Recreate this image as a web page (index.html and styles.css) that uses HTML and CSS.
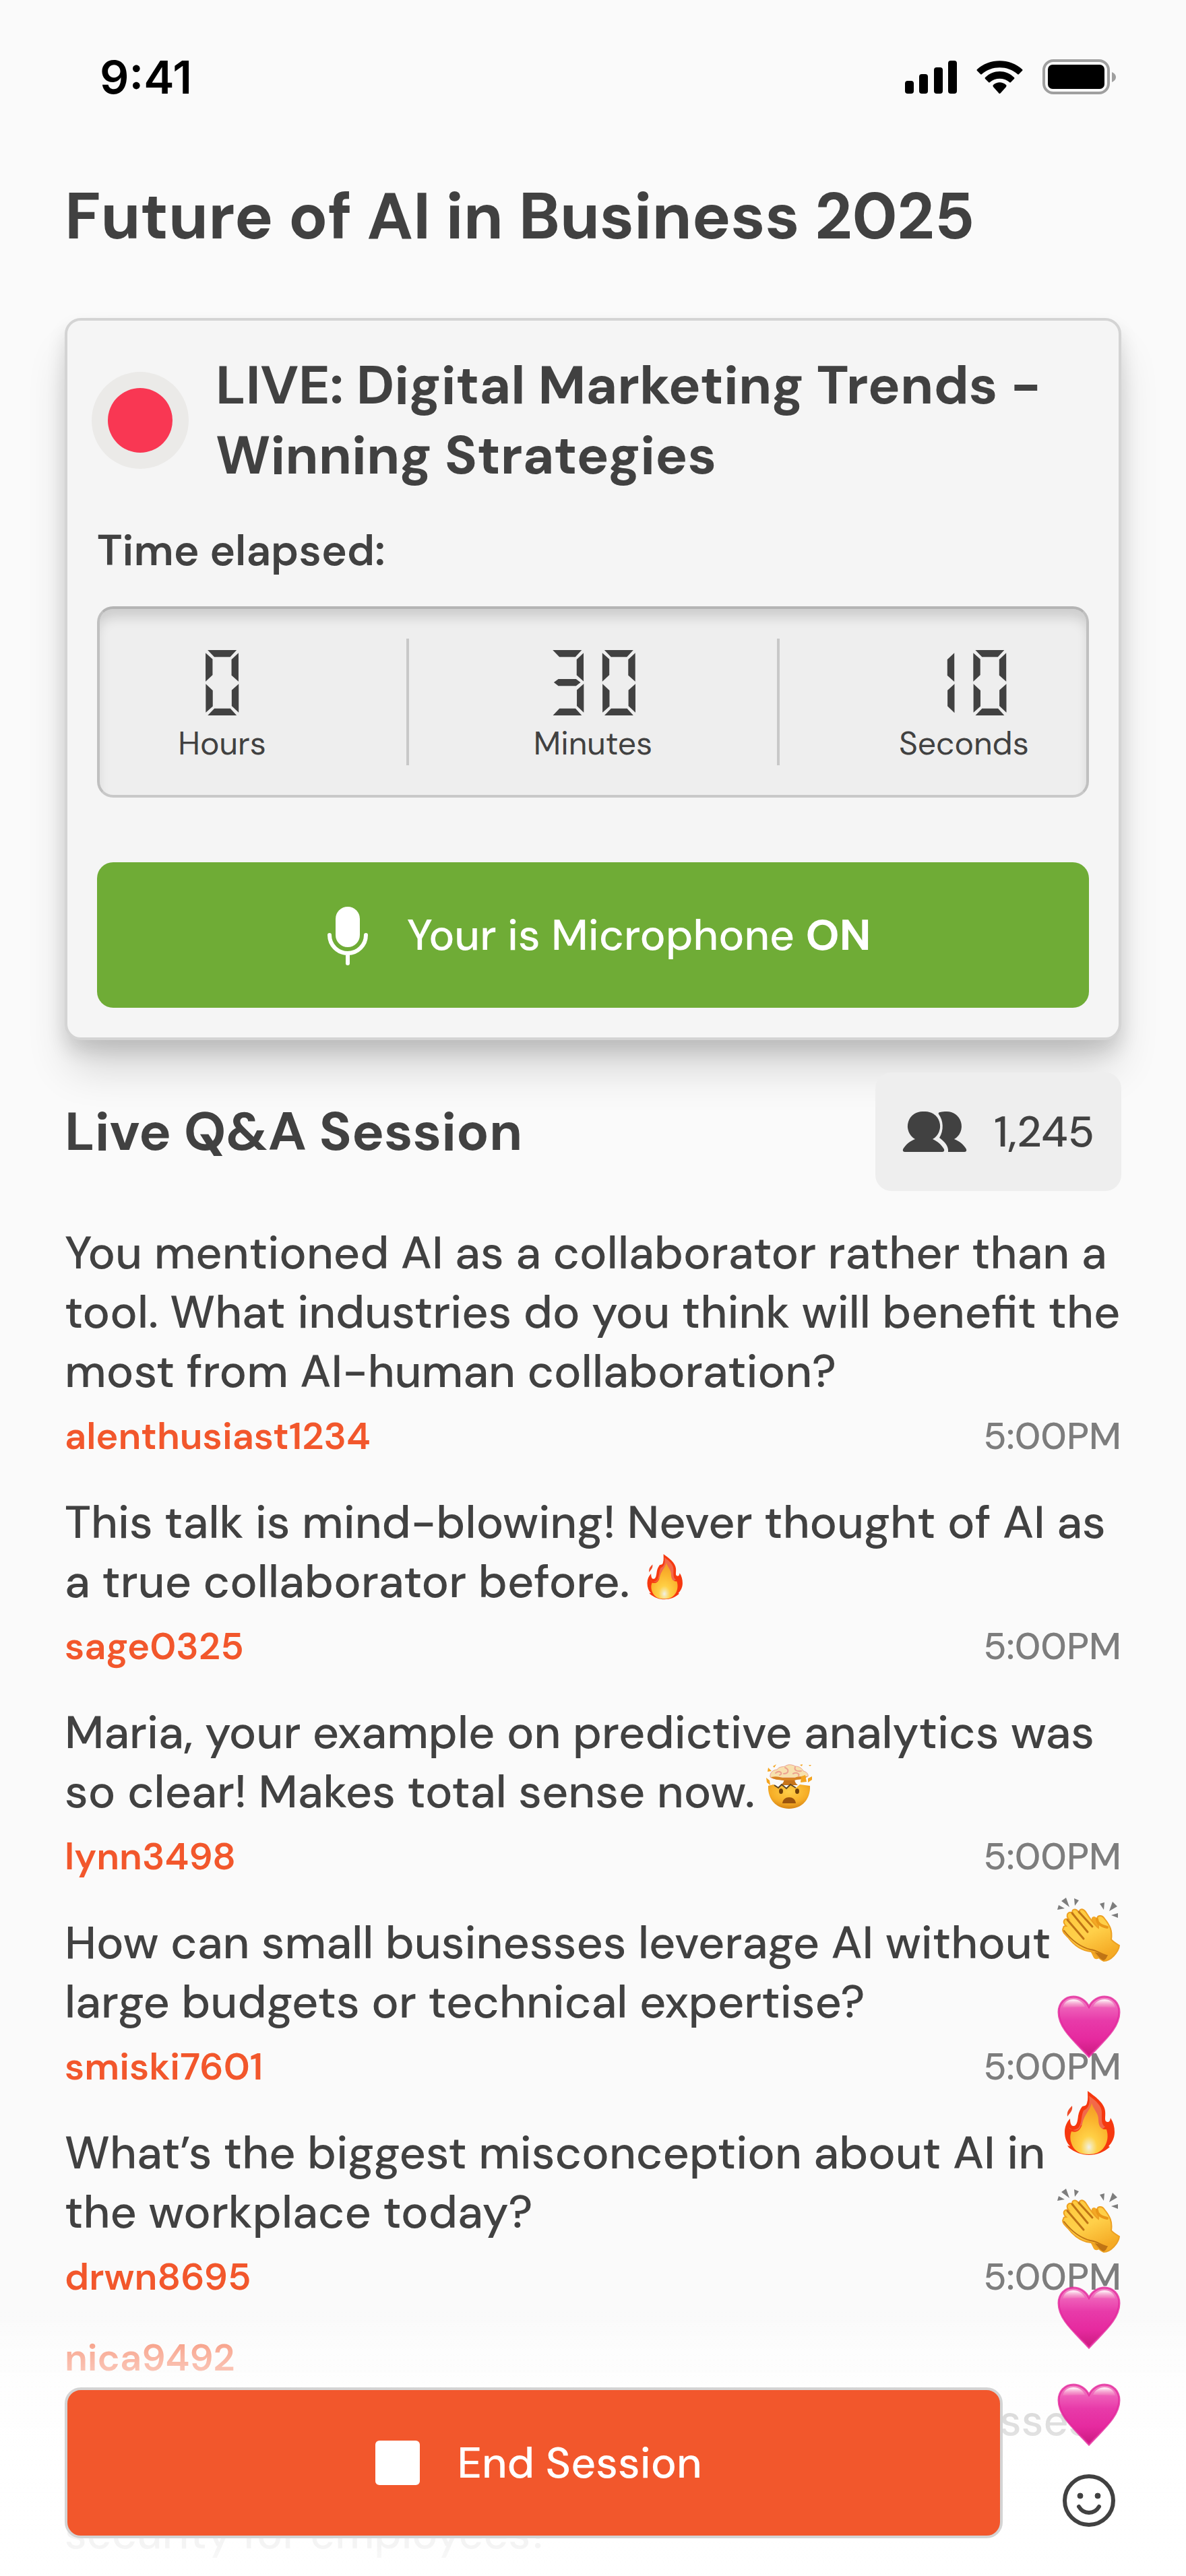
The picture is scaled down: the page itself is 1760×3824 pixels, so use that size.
FILE: index.html
```html
<!DOCTYPE html>
<html lang="en">
	<head>
		<meta charset="UTF-8" />
		<meta name="viewport" content="width=device-width, initial-scale=1.0" />
		<title>Live Session</title>
		<link rel="stylesheet" href="styles.css">
	</head>
	<body>
		<!-- shared emoji shapes -->
		<svg class="sprite" aria-hidden="true">
			<defs>
				<linearGradient id="heartFill" x1="0" y1="0" x2="0" y2="1">
					<stop offset="0" stop-color="#f28cc6" />
					<stop offset="0.2" stop-color="#ee5cb8" />
					<stop offset="0.4" stop-color="#e83aa9" />
					<stop offset="0.7" stop-color="#e62a9f" />
					<stop offset="1" stop-color="#c91a7e" />
				</linearGradient>
				<linearGradient id="heartShine" x1="0" y1="0" x2="0" y2="1">
					<stop offset="0" stop-color="#fff" />
					<stop offset="1" stop-color="#f7a6c8" stop-opacity="0.2" />
				</linearGradient>
				<radialGradient id="flameInner" cx="0.5" cy="0.86" r="0.85">
					<stop offset="0" stop-color="#f1f0ea" />
					<stop offset="0.1" stop-color="#f7e5a0" />
					<stop offset="0.26" stop-color="#ffd046" />
					<stop offset="0.62" stop-color="#fbb52e" />
					<stop offset="1" stop-color="#f39a24" />
				</radialGradient>
				<linearGradient id="handFill" x1="0" y1="0" x2="0.5" y2="1">
					<stop offset="0" stop-color="#ffc93c" />
					<stop offset="0.55" stop-color="#ffd04a" />
					<stop offset="1" stop-color="#f5ab25" />
				</linearGradient>
				<radialGradient id="faceFill" cx="0.5" cy="0.3" r="0.75">
					<stop offset="0" stop-color="#ffcf48" />
					<stop offset="0.6" stop-color="#f6ad26" />
					<stop offset="1" stop-color="#cf7b12" />
				</radialGradient>
				<symbol id="heart" viewBox="0 0 96 96">
					<path d="M48 19C43 9 34 4 25 4C12 4 3 14 3 27C3 51 27 70 48 93C69 70 93 51 93 27C93 14 84 4 71 4C62 4 53 9 48 19Z" fill="url(#heartFill)" />
					<path d="M48 19C43 9 34 4 25 4C12 4 3 14 3 27C3 51 27 70 48 93C69 70 93 51 93 27C93 14 84 4 71 4C62 4 53 9 48 19Z" fill="none" stroke="#e3259b" stroke-width="3" stroke-opacity="0.8" />
					<path d="M9 20C11 12 17 8 25 8C33 8 39 12 42 19Z" fill="url(#heartShine)" />
					<path d="M54 19C57 12 63 8 71 8C79 8 85 12 87 20Z" fill="url(#heartShine)" />
				</symbol>
				<symbol id="fire" viewBox="0 0 96 96">
					<path d="M46 0C57 8 71 18 72 30C73 38 70 45 75 46C79 46 79 44 80 40C84 46 86 53 86 61C86 70 82 77 77 82L79 83C70 91 60 95 48 95C37 95 27 91 18 84L16 81L20 82C15 77 12 70 12 61C12 53 15 46 20 41C20 47 21 52 25 52C30 52 31 45 32 37C33 31 35 27 38 23C40 22 44 23 45 18C47 12 46 6 46 0Z" fill="#f6380f" />
					<path d="M48 7C58 14 67 22 67 32C67 42 66 50 72 53C66 59 61 57 60 51L36 51C34 59 27 62 18 54C21 59 28 59 33 54C38 46 36 37 40 29C48 26 50 17 48 7Z" fill="#f2694a" />
					<path d="M52 18C55 28 62 33 62 42C62 51 65 58 74 57C77 66 76 76 70 84C65 91 57 94 48 94C37 94 30 91 25 84C20 76 19 67 22 60C31 63 36 57 38 49C40 40 43 36 46 31C49 26 51 23 52 18Z" fill="url(#flameInner)" />
					<path d="M23 22C24 29 21 31 16 38C15 30 18 27 23 22Z" fill="#ee4d2a" />
				</symbol>
				<symbol id="clap" viewBox="0 0 96 96">
					<g fill="#7d7d7d">
						<path d="M14 1L19 15L7 6ZM26 2L33 5L27 13ZM3 12L12 17L1 19ZM64 10L71 8L70 19ZM83 7L90 14L78 21ZM81 27L91 24V31Z" />
					</g>
					<path d="M52 45L52 31C55 27 59 29 62 35L80 60L64 90C61 93 57 93 55 90L50 80C38 80 26 70 17 59L10 51C7 46 11 43 15 46Z" fill="#f3a826" />
					<path d="M10 46C7 50 12 55 17 60C26 72 38 80 51 81C58 82 61 92 70 95C80 95 92 82 93 72C88 69 83 66 81 63C83 50 79 42 71 32C67 26 60 27 60 33C60 38 63 42 62 46C58 43 49 32 43 22C38 16 34 18 33 23C28 15 21 19 24 24C17 20 13 27 18 33C11 31 8 37 14 43C12 43 10 44 10 46Z" fill="url(#handFill)" stroke="#eda022" stroke-width="2" />
					<path d="M60 33C60 39 66 43 75 45" fill="none" stroke="#e99718" stroke-width="4" stroke-linecap="round" />
					<g fill="none" stroke="#bf7415" stroke-width="3" stroke-linecap="round">
						<path d="M33 22L53 44" />
						<path d="M23 24L46 52" />
						<path d="M16 34L40 62" />
						<path d="M11 50C22 64 34 74 50 78C60 79 64 84 74 87" stroke-width="2" />
					</g>
					<path d="M56 82C63 82 68 87 76 86C74 91 72 94 69 94C64 92 61 86 56 82Z" fill="#bf7415" />
				</symbol>
				<symbol id="mindblown" viewBox="0 0 68 68">
					<path d="M26 17H43C41 24 43 28 47 31H22C26 27 28 23 26 17Z" fill="#c6741a" />
					<path d="M6 19C5 12 11 8 16 8C19 3 25 4 28 3C33 -1 40 1 43 3C50 3 54 7 55 10C60 11 63 15 62 18C57 21 49 18 43 20H26C19 21 11 23 6 19Z" fill="#f7e1ae" stroke="#eda28f" stroke-width="1" />
					<path d="M7 19C17 17 20 19 25 20H43C48 17 56 19 61 18C54 24 45 22 42 24H25C18 23 11 23 7 19Z" fill="#d88322" />
					<path d="M14 13C20 8 26 14 20 16M28 5C35 8 33 14 26 14M43 4C41 9 46 11 52 10M40 14C46 11 50 15 48 17" fill="none" stroke="#eda28f" stroke-width="2" stroke-linecap="round" />
					<path d="M3 32L11 30L18 35L23 30L30 36L36 30L44 35L50 30L65 32C66 52 53 66 34 66C15 66 2 52 3 32Z" fill="url(#faceFill)" />
					<path d="M12 31L18 35L23 30L30 36L36 30L44 35" fill="none" stroke="#5d4524" stroke-width="2" />
					<ellipse cx="22" cy="40" rx="3" ry="4" fill="#6f4009" />
					<ellipse cx="46" cy="40" rx="3" ry="4" fill="#6f4009" />
					<path d="M24 58C25 46 43 46 44 58Z" fill="#9a530d" />
					<path d="M0 20L5 24L6 31L1 27ZM3 5L8 10L2 11ZM10 3L15 0L12 5ZM52 18L58 16L60 26L51 27ZM62 21L68 18V23L62 27ZM50 1L54 0L53 3ZM63 1L67 1L65 3Z" fill="#f4a41f" />
				</symbol>
			</defs>
		</svg>

		<header class="status-bar">
			<span class="clock">9:41</span>
			<div class="status-icons">
				<svg width="77" height="49" viewBox="0 0 77 49" aria-hidden="true">
					<rect x="0" y="30" width="13" height="19" rx="4" />
					<rect x="21" y="20" width="13" height="29" rx="4" />
					<rect x="43" y="10" width="13" height="39" rx="4" />
					<rect x="64" y="0" width="13" height="49" rx="4" />
				</svg>
				<svg width="69" height="49" viewBox="0 0 69 49" aria-hidden="true">
					<path d="M1 13C19 -4 50 -4 68 13Q69 14 68 15L63 20Q62 21 61 20C46 7 23 7 8 20Q7 21 6 20L1 15Q0 14 1 13Z" />
					<path d="M13 25C25 13 44 13 56 25Q57 26 56 27L51 32Q50 33 49 32C41 25 28 25 20 32Q19 33 18 32L13 27Q12 26 13 25Z" />
					<path d="M25 36C31 31 38 31 44 36Q45 37 44 39L36 48Q34 50 33 48L25 39Q24 37 25 36Z" />
				</svg>
				<svg width="109" height="52" viewBox="0 0 109 52" aria-hidden="true">
					<rect x="2" y="2" width="96" height="48" rx="14" fill="none" stroke="#9f9f9f" stroke-width="4" />
					<rect x="8" y="8" width="84" height="36" rx="7" />
					<path d="M103 19C111 22 111 31 103 34Z" fill="#9f9f9f" />
				</svg>
			</div>
		</header>

		<main class="page">
			<h1 class="page-title">Future of AI in Business 2025</h1>

			<section class="card">
				<div class="live">
					<div class="live-icon">
						<svg class="record" width="144" height="144" viewBox="0 0 144 144" aria-hidden="true">
							<circle cx="72" cy="72" r="72" fill="#ebeae8" />
							<circle cx="72" cy="72" r="48" fill="#f93753" />
						</svg>
					</div>
					<h2 class="live-title">LIVE: Digital Marketing Trends - Winning Strategies</h2>
				</div>
				<p class="elapsed">Time elapsed:</p>
				<div class="timer">
					<div class="unit">
						<span class="digits">0</span>
						<span class="label">Hours</span>
					</div>
					<div class="divider"></div>
					<div class="unit">
						<span class="digits">30</span>
						<span class="label">Minutes</span>
					</div>
					<div class="divider"></div>
					<div class="unit">
						<span class="digits">10</span>
						<span class="label">Seconds</span>
					</div>
				</div>
				<button type="button" class="mic-button">
					<svg width="96" height="96" viewBox="0 0 96 96" aria-hidden="true">
						<rect x="30" y="6" width="36" height="60" rx="18" fill="#fff" />
						<path d="M21 48a27 27 0 0 0 54 0M48 75v15" fill="none" stroke="#fff" stroke-width="6" stroke-linecap="round" />
					</svg>
					<span>Your is Microphone <strong>ON</strong></span>
				</button>
			</section>

			<section class="qa">
				<div class="qa-header">
					<h2 class="qa-title">Live Q&amp;A Session</h2>
					<div class="viewers">
						<svg width="96" height="96" viewBox="0 0 96 96" aria-hidden="true">
							<path d="M32 18A22 22 0 0 1 45 59C52 62 58 67 62 74Q63 78 59 78H4Q0 78 1 74C5 67 11 62 19 59A22 22 0 0 1 32 18Z" />
							<path d="M54 22C53 21 54 19 56 19C60 18 62 18 65 18A22 22 0 0 1 77 59C85 62 91 67 95 74Q96 78 92 78H68C69 69 62 62 55 57C62 46 61 31 54 22Z" />
						</svg>
						<span>1,245</span>
					</div>
				</div>

				<ul class="messages">
					<li class="message">
						<p class="text">You mentioned AI as a collaborator rather than a tool. What industries do you think will benefit the most from AI-human collaboration?</p>
						<div class="meta">
							<a href="#" class="user">alenthusiast1234</a>
							<time class="time">5:00PM</time>
						</div>
					</li>
					<li class="message">
						<p class="text">This talk is mind-blowing! Never thought of AI as a true collaborator before. <svg class="emoji" role="img" aria-label="fire"><use href="#fire" /></svg></p>
						<div class="meta">
							<a href="#" class="user">sage0325</a>
							<time class="time">5:00PM</time>
						</div>
					</li>
					<li class="message">
						<p class="text">Maria, your example on predictive analytics was so clear! Makes total sense now. <svg class="emoji" role="img" aria-label="mind blown"><use href="#mindblown" /></svg></p>
						<div class="meta">
							<a href="#" class="user">lynn3498</a>
							<time class="time">5:00PM</time>
						</div>
					</li>
					<li class="message">
						<p class="text">How can small businesses leverage AI without large budgets or technical expertise?</p>
						<div class="meta">
							<a href="#" class="user">smiski7601</a>
							<time class="time">5:00PM</time>
						</div>
					</li>
					<li class="message">
						<p class="text">What’s the biggest misconception about AI in the workplace today?</p>
						<div class="meta">
							<a href="#" class="user">drwn8695</a>
							<time class="time">5:00PM</time>
						</div>
					</li>
					<li class="message">
						<div class="meta">
							<a href="#" class="user">nica9492</a>
						</div>
						<p class="text compact">With AI growing this quickly, how could businesses balance automation at work while keeping job security for employees?</p>
					</li>
				</ul>
			</section>
		</main>

		<div class="reactions">
			<svg><use href="#clap" /></svg>
			<svg><use href="#heart" /></svg>
			<svg><use href="#fire" /></svg>
			<svg><use href="#clap" /></svg>
			<svg><use href="#heart" /></svg>
			<svg><use href="#heart" /></svg>
		</div>

		<footer class="bottom-bar">
			<button type="button" class="end-button">
				<svg width="96" height="96" viewBox="0 0 96 96" aria-hidden="true">
					<rect x="15" y="15" width="66" height="66" rx="6" fill="#fff" />
				</svg>
				<span>End Session</span>
			</button>
			<button type="button" class="react-button" aria-label="React">
				<svg width="96" height="96" viewBox="0 0 96 96" aria-hidden="true">
					<circle cx="48" cy="48" r="36" fill="none" stroke="#414141" stroke-width="6" />
					<circle cx="35" cy="41" r="4" fill="#414141" stroke="#414141" />
					<circle cx="61" cy="41" r="4" fill="#414141" stroke="#414141" />
					<path d="M33 57C40 69 56 69 63 57" fill="none" stroke="#414141" stroke-width="6" stroke-linecap="round" />
				</svg>
			</button>
		</footer>
	</body>
</html>
```

FILE: styles.css
```css
* {
	box-sizing: border-box;
}
body {
	margin: 0;
	height: 100vh;
	display: flex;
	flex-direction: column;
	overflow: hidden;
	font-family: "DM Sans", Inter, "Liberation Sans", sans-serif;
	background-color: #fafafa;
	color: #414141;
}
h1, h2, p, ul {
	margin: 0;
	padding: 0;
}
button {
	font-family: inherit;
	cursor: pointer;
}
svg {
	display: block;
	flex-shrink: 0;
}
.sprite {
	position: absolute;
	width: 0;
	height: 0;
}

/* status bar */
.status-bar {
	display: flex;
	flex-shrink: 0;
	align-items: center;
	justify-content: space-between;
	height: 228px;
	padding: 0 104px 0 148px;
	color: #000;
}
.clock {
	font-family: Inter, sans-serif;
	font-size: 68px;
	font-weight: 600;
}
.status-icons {
	display: flex;
	align-items: center;
	gap: 29px;
}

.page {
	flex: 1;
	min-height: 0;
	overflow: hidden;
	padding: 32px 96px 0;
}
.page-title {
	font-size: 96px;
	font-weight: 700;
	line-height: 124px;
	margin-bottom: 88px;
}

/* live card */
.card {
	padding: 44px;
	border: 4px solid #d4d4d4;
	border-radius: 24px;
	background-color: #f5f5f5;
	box-shadow: 0 48px 64px -8px rgba(0, 0, 0, 0.16), 0 16px 28px rgba(0, 0, 0, 0.12);
}
.live {
	display: flex;
	align-items: center;
	gap: 48px;
}
.live-icon {
	display: flex;
	justify-content: center;
	flex: 0 0 128px;
	min-width: 0;
}
.live-title {
	font-size: 80px;
	font-weight: 700;
	line-height: 104px;
}
.elapsed {
	margin: 48px 0 40px;
	font-size: 64px;
	font-weight: 600;
	line-height: 84px;
}
.timer {
	display: flex;
	justify-content: space-between;
	padding: 44px;
	border: 4px solid;
	border-color: #b4b4b4 #c0c0c0 #c8c8c8;
	border-radius: 24px;
	background-color: #eee;
	box-shadow: inset 0 16px 18px -4px rgba(0, 0, 0, 0.14);
}
.unit {
	display: flex;
	flex: 0 0 20%;
	flex-direction: column;
	align-items: center;
}
.digits {
	font-family: "DSEG7 Classic", "Digital Numbers", "Roboto Condensed", Roboto, sans-serif;
	font-size: 96px;
	line-height: 124px;
}
.label {
	font-size: 48px;
	line-height: 64px;
}
.divider {
	width: 4px;
	background-color: #c8c8c8;
}
.mic-button {
	display: flex;
	align-items: center;
	justify-content: center;
	gap: 40px;
	width: 100%;
	height: 216px;
	margin-top: 96px;
	border: none;
	border-radius: 24px;
	background-color: #6fac36;
	color: #fff;
	font-size: 64px;
	font-weight: 500;
}

/* questions */
.qa-header {
	display: flex;
	align-items: center;
	justify-content: space-between;
	margin: 48px 0;
}
.qa-title {
	font-size: 80px;
	font-weight: 700;
	line-height: 104px;
}
.viewers {
	display: flex;
	position: relative;
	align-items: center;
	gap: 40px;
	height: 176px;
	padding: 0 40px;
	border-radius: 24px;
	background-color: #eee;
	font-size: 64px;
	font-weight: 500;
	fill: #414141;
}
.messages {
	display: flex;
	flex-direction: column;
	gap: 48px;
	list-style: none;
}
.message {
	display: flex;
	flex-direction: column;
	gap: 16px;
}
.text {
	font-size: 68px;
	font-weight: 500;
	line-height: 88px;
}
.compact {
	font-size: 64px;
	line-height: 84px;
}
.emoji {
	display: inline-block;
	width: 68px;
	height: 68px;
	vertical-align: -4px;
}
.meta {
	display: flex;
	justify-content: space-between;
	font-size: 56px;
	line-height: 72px;
}
.user {
	color: #f2572c;
	font-weight: 600;
	text-decoration: none;
}
.time {
	color: #7d7d7d;
	font-weight: 500;
}

/* floating over the chat */
.reactions {
	position: fixed;
	right: 96px;
	bottom: 192px;
	z-index: 2;
	display: flex;
	flex-direction: column;
	gap: 48px;
}
.reactions svg {
	width: 96px;
	height: 96px;
}
.bottom-bar {
	position: fixed;
	right: 0;
	bottom: 0;
	left: 0;
	display: flex;
	align-items: flex-end;
	gap: 80px;
	padding: 114px 96px 56px;
	background: linear-gradient(rgba(255, 255, 255, 0), rgba(255, 255, 255, 0.5) 14%, rgba(255, 255, 255, 0.78) 30%, rgba(255, 255, 255, 0.86) 50%, rgba(255, 255, 255, 0.95) 90%, #fff);
}
.end-button {
	display: flex;
	flex: 1;
	align-items: center;
	justify-content: center;
	gap: 40px;
	height: 224px;
	border: 4px solid #d4d4d4;
	border-radius: 24px;
	background-color: #f2572c;
	color: #fff;
	font-size: 64px;
	font-weight: 500;
}
.react-button {
	margin-bottom: 8px;
	padding: 0;
	border: none;
	background: none;
}
```
